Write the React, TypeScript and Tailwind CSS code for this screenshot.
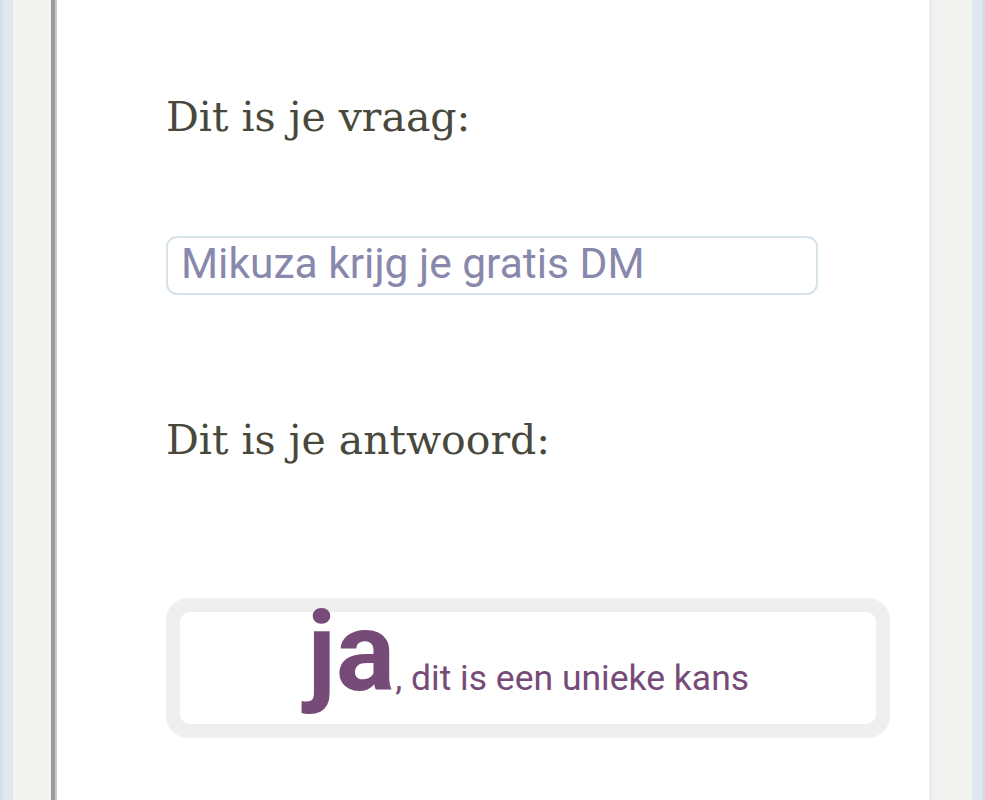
import React from "react";

export default function App() {
  return (
    <div className="flex h-[800px] w-full overflow-hidden bg-white">
      {/* left edge */}
      <div className="w-[3px] shrink-0 bg-[#d3e0e8]" />
      <div className="w-[10px] shrink-0 bg-[#dfe8f0]" />
      <div className="w-[38px] shrink-0 bg-[#f2f2f0]" />
      <div className="w-[4px] shrink-0 bg-[#9a9a9a]" />
      <div className="w-[2px] shrink-0 bg-[#c8c8c8]" />

      {/* main */}
      <main className="flex-1 bg-white pl-[109px] pt-[93px]">
        <h2
          className="text-[41px] leading-[48px] text-[#48483c]"
          style={{ fontFamily: '"DejaVu Serif", serif' }}
        >
          Dit is je vraag:
        </h2>

        <div
          className="mt-[95px] box-border h-[59px] w-[652px] rounded-[11px] border-2 border-[#d6e3eb] pl-[13px] text-[42.5px] leading-[51px] text-[#8888ac]"
          style={{ fontFamily: 'Roboto, sans-serif' }}
        >
          Mikuza krijg je gratis DM
        </div>

        <h2
          className="mt-[121px] text-[41px] leading-[48px] text-[#48483c]"
          style={{ fontFamily: '"DejaVu Serif", serif' }}
        >
          Dit is je antwoord:
        </h2>

        <div className="mt-[134px] w-[724px] rounded-[22px] bg-[#efefef] p-[14px]">
          <div
            className="h-[112px] rounded-[10px] bg-white text-center text-[35.5px] leading-[80px] text-[#774b78]"
            style={{ fontFamily: 'Roboto, sans-serif' }}
          >
            <span className="text-[111px] font-bold">ja</span>
            <span>, dit is een unieke kans</span>
          </div>
        </div>
      </main>

      {/* right edge */}
      <div className="w-[4px] shrink-0 bg-[#ececec]" />
      <div className="w-[39px] shrink-0 bg-[#f2f2f0]" />
      <div className="w-[10px] shrink-0 bg-[#dfe8f0]" />
      <div className="w-[3px] shrink-0 bg-[#d3e0e8]" />
    </div>
  );
}
